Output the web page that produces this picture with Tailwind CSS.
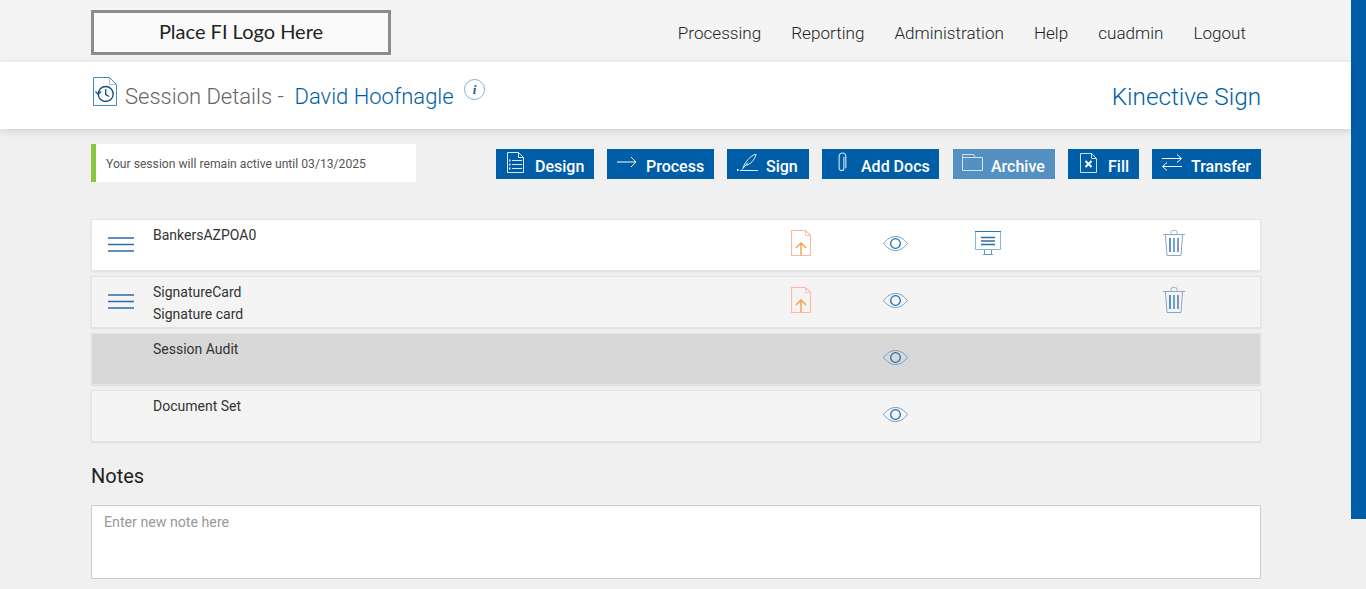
<!DOCTYPE html>
<html lang="en">
<head>
<meta charset="utf-8">
<title>Session Details</title>
<script src="https://cdn.jsdelivr.net/npm/@tailwindcss/browser@4"></script>
</head>
<body class="bg-[#f0f0f0] font-['Roboto',sans-serif] h-[589px] overflow-hidden flex">
<main class="w-[1351px] shrink-0">
  <header class="h-[62px] bg-[#f4f4f4] pl-[91px] pr-[105px] flex items-start justify-between">
    <div class="mt-[10px] w-[300px] h-[45px] pb-[3px] border-[3px] border-[#8c8c8c] bg-[#fafafa] flex items-center justify-center font-['Lato',sans-serif] text-[20px] text-[#222]">Place FI Logo Here</div>
    <nav class="h-[62px] pt-[6px] flex items-center gap-[30px] font-light text-[17.100px] text-[#222]">
      <a>Processing</a><a>Reporting</a><a>Administration</a><a>Help</a><a>cuadmin</a><a>Logout</a>
    </nav>
  </header>
  <section class="h-[67px] bg-white shadow-[0_2px_8px_rgba(0,0,0,0.14)] pl-[91px] pr-[90px] flex justify-between relative">
    <div class="flex items-start">
      <svg class="mt-[15px] ml-[2px]" width="24" height="29" viewBox="0 0 24 29" fill="none"><path d="M.5.500h16l7 7v21H.5z" stroke="#3d8bc9"/><path d="M16.500.500v7h7" stroke="#9cc2e0"/><circle cx="12.700" cy="17" r="7.500" stroke-width="1.400" stroke="#1a4f7d"/><path d="M12.700 12v5.500l3.500 2" stroke-width="1.300" stroke="#1a4f7d"/><path d="M2.500 14.500l2.700 3 3-3" stroke-width="1.200" stroke="#1a4f7d"/></svg>
      <h1 class="ml-[8px] mt-[19px] pt-[1px] font-light text-[22px] leading-[30px] text-[#666]">Session Details -&nbsp; <span class="text-[#005ea8]">David Hoofnagle</span></h1>
      <svg class="ml-[10px] mt-[17px]" width="21" height="21" viewBox="0 0 21 21"><circle cx="10.500" cy="10.500" r="10" fill="none" stroke="#7fb0d6"/><text x="10.500" y="15" text-anchor="middle" font-family="Liberation Serif" font-style="italic" font-weight="700" font-size="13" fill="#1a5a94">i</text></svg>
    </div>
    <p class="mt-[20px] font-light text-[24.300px] leading-[30px] text-[#005ea8]">Kinective Sign</p>
  </section>
  <section class="pl-[91px] pr-[90px] mt-[15px] h-[75px] flex justify-between items-start">
    <div class="w-[325px] h-[38px] bg-white border-l-[5px] border-[#8bc53f] pl-[10px] pt-[2px] flex items-center text-[12.150px] text-[#555]">Your session will remain active until 03/13/2025</div>
    <div class="mt-[5px] flex gap-[13px] text-white text-[16px] font-medium">
      <a class="w-[98px] h-[30px] bg-[#005ea8] flex items-center pl-[11px]">
        <svg class="w-[17px] h-[21px] mb-[3px]" viewBox="0 0 17 21" fill="none" stroke="#dbe9f5"><path d="M.5.500h11l5 5v15H.5z"/><path d="M11.500.500v5h5"/><path d="M5 8.500h10M5 12.500h10M5 16.500h10"/><path d="M2 8.500h1.500M2 12.500h1.500M2 16.500h1.500" stroke-width="2"/></svg>
        <span class="ml-[11px] pt-[6px]">Design</span></a>
      <a class="w-[107px] h-[30px] bg-[#005ea8] flex items-center pl-[10px]">
        <svg class="w-[20px] h-[12px] mb-[4px]" viewBox="0 0 20 12" fill="none" stroke="#fff"><path d="M0 6h19M14 1l5 5-5 5"/></svg>
        <span class="ml-[9px] pt-[6px]">Process</span></a>
      <a class="w-[82px] h-[30px] bg-[#005ea8] flex items-center pl-[10px]">
        <svg class="w-[21px] h-[17px] mb-[3px]" viewBox="0 0 21 17" fill="none" stroke="#e6f0f8"><path d="M0 16h1.500" stroke-width="2"/><path d="M3 16.500h18"/><path d="M6 14c2-6 7-12 13-14-1 6-6 11-11 11.500"/><path d="M5 15.500l6-7"/></svg>
        <span class="ml-[8px] pt-[6px]">Sign</span></a>
      <a class="w-[117px] h-[30px] bg-[#005ea8] flex items-center pl-[15px]">
        <svg class="w-[10px] h-[21px] mb-[3px]" viewBox="0 0 10 22" fill="none" stroke="#cfe0ef" stroke-width="1.200"><path d="M7 5v12a2.500 2.500 0 0 1-5 0V4.500a3.500 3.500 0 0 1 7 0V17"/></svg>
        <span class="ml-[14px] pt-[6px]">Add Docs</span></a>
      <a class="w-[102px] h-[30px] bg-[#5590c3] flex items-center pl-[9px] ml-[1px]">
        <svg class="w-[21px] h-[17px] mb-[3px]" viewBox="0 0 21 17" fill="none" stroke="#d5e3f0"><path d="M.5 16.500V.500h11l2 3h7v13z"/><path d="M.500 3.500h13"/></svg>
        <span class="ml-[8px] pt-[6px]">Archive</span></a>
      <a class="w-[71px] h-[30px] bg-[#005ea8] flex items-center pl-[12px]">
        <svg class="w-[17px] h-[20px] mb-[3px]" viewBox="0 0 17 20" fill="none" stroke="#cfe0ef"><path d="M.5.500h11l5 5v14H.5z"/><path d="M11.500.500v5h5"/><path d="M5.500 8l6 6M11.500 8l-6 6" stroke="#fff" stroke-width="2"/></svg>
        <span class="ml-[11px] pt-[6px]">Fill</span></a>
      <a class="w-[109px] h-[30px] bg-[#005ea8] flex items-center pl-[10px]">
        <svg class="w-[20px] h-[17px] mb-[3px]" viewBox="0 0 20 17" fill="none" stroke="#fff"><path d="M0 4.500h19.500M15 .500l4.500 4-4.500 4"/><path d="M20 12.500H.5M5 8.500l-4.500 4 4.500 4"/></svg>
        <span class="ml-[9px] pt-[6px]">Transfer</span></a>
    </div>
  </section>
  <section class="mx-[91px] w-[1170px] flex flex-col gap-[5px] text-[14px] leading-[22px] text-[#333]">
    <div class="h-[52px] bg-white border border-[#e3e3e3] shadow-[0_1px_2px_rgba(0,0,0,0.08)] grid grid-cols-[61px_601px_94px_94px_93px_92px_94px_39px]">
      <div class="pt-[17px] pl-[16px]"><svg width="26" height="15" viewBox="0 0 26 15" fill="none" stroke="#2f6aa8" stroke-width="1.300"><path d="M0 1h26M0 7.500h26M0 14h26"/></svg></div>
      <div class="pt-[4px]">BankersAZPOA0</div>
      <div class="flex justify-center pt-[10px]"><svg width="20" height="26" viewBox="0 0 20 26" fill="none" stroke="#ffb8a0" stroke-width="1.200"><path d="M.5.500h14l5 5v20H.5z"/><path d="M14.500.500v5h5" stroke="#f3c9bb"/><path d="M10 25.500V13M5 18l5-5 5 5" stroke="#f79a4a" stroke-width="1.300"/></svg></div>
      <div class="flex justify-center pt-[16px]"><svg width="25" height="15" viewBox="0 0 25 15" fill="none"><path d="M.5 7.500C4 3 8 .5 12.500.5S21 3 24.500 7.500C21 12 17 14.500 12.500 14.500S4 12 .5 7.500z" stroke="#6f9ec8"/><circle cx="12.500" cy="7.500" r="4.800" stroke="#1f6fb0" stroke-width="1.300"/></svg></div>
      <div class="flex justify-center pt-[11px] pr-[1px]"><svg width="26" height="24" viewBox="0 0 26 24" fill="none"><path d="M.5.500h25v18H.5z" stroke="#7fb6dc"/><path d="M0 .500h26" stroke="#2e76b0"/><path d="M6 6.500h14M6 10h14M6 13.500h14" stroke="#2f6ca3" stroke-width="1.400"/><path d="M9.500 19v4M16.500 19v4M8 23.500h10" stroke="#5f95c3"/></svg></div>
      <div></div>
      <div class="flex justify-center pt-[10px]"><svg width="22" height="26" viewBox="0 0 22 26" fill="none"><path d="M0 4.500h22" stroke="#8fa9c6"/><path d="M8 4V2a1.500 1.500 0 0 1 1.500-1.500h3A1.500 1.500 0 0 1 14 2v2" stroke="#a3b6c9"/><path d="M2.500 5l1.500 20.500h14L19.500 5" stroke="#88a6c8"/><path d="M7 8v14" stroke="#3c6aa8" stroke-width="1.500"/><path d="M11 8v14" stroke="#1a9ad0" stroke-width="1.500"/><path d="M15 8v14" stroke="#6d6aa8" stroke-width="1.500"/></svg></div>
      <div></div>
    </div>
    <div class="h-[52px] bg-[#f4f4f4] border border-[#e3e3e3] shadow-[0_1px_2px_rgba(0,0,0,0.08)] grid grid-cols-[61px_601px_94px_94px_93px_92px_94px_39px]">
      <div class="pt-[17px] pl-[16px]"><svg width="26" height="15" viewBox="0 0 26 15" fill="none" stroke="#2f6aa8" stroke-width="1.300"><path d="M0 1h26M0 7.500h26M0 14h26"/></svg></div>
      <div class="pt-[4px]"><p>SignatureCard</p><p>Signature card</p></div>
      <div class="flex justify-center pt-[10px]"><svg width="20" height="26" viewBox="0 0 20 26" fill="none" stroke="#ffb8a0" stroke-width="1.200"><path d="M.5.500h14l5 5v20H.5z"/><path d="M14.500.500v5h5" stroke="#f3c9bb"/><path d="M10 25.500V13M5 18l5-5 5 5" stroke="#f79a4a" stroke-width="1.300"/></svg></div>
      <div class="flex justify-center pt-[16px]"><svg width="25" height="15" viewBox="0 0 25 15" fill="none"><path d="M.5 7.500C4 3 8 .5 12.500.5S21 3 24.500 7.500C21 12 17 14.500 12.500 14.500S4 12 .5 7.500z" stroke="#6f9ec8"/><circle cx="12.500" cy="7.500" r="4.800" stroke="#1f6fb0" stroke-width="1.300"/></svg></div>
      <div></div>
      <div></div>
      <div class="flex justify-center pt-[10px]"><svg width="22" height="26" viewBox="0 0 22 26" fill="none"><path d="M0 4.500h22" stroke="#8fa9c6"/><path d="M8 4V2a1.500 1.500 0 0 1 1.500-1.500h3A1.500 1.500 0 0 1 14 2v2" stroke="#a3b6c9"/><path d="M2.500 5l1.500 20.500h14L19.500 5" stroke="#88a6c8"/><path d="M7 8v14" stroke="#3c6aa8" stroke-width="1.500"/><path d="M11 8v14" stroke="#1a9ad0" stroke-width="1.500"/><path d="M15 8v14" stroke="#6d6aa8" stroke-width="1.500"/></svg></div>
      <div></div>
    </div>
    <div class="h-[52px] bg-[#d8d8d8] border border-[#e3e3e3] shadow-[0_1px_2px_rgba(0,0,0,0.08)] grid grid-cols-[61px_601px_94px_94px_93px_92px_94px_39px]">
      <div></div>
      <div class="pt-[4px]">Session Audit</div>
      <div></div>
      <div class="flex justify-center pt-[16px]"><svg width="25" height="15" viewBox="0 0 25 15" fill="none"><path d="M.5 7.500C4 3 8 .5 12.500.5S21 3 24.500 7.500C21 12 17 14.500 12.500 14.500S4 12 .5 7.500z" stroke="#6f9ec8"/><circle cx="12.500" cy="7.500" r="4.800" stroke="#1f6fb0" stroke-width="1.300"/></svg></div>
    </div>
    <div class="h-[52px] bg-[#f4f4f4] border border-[#e3e3e3] shadow-[0_1px_2px_rgba(0,0,0,0.08)] grid grid-cols-[61px_601px_94px_94px_93px_92px_94px_39px]">
      <div></div>
      <div class="pt-[4px]">Document Set</div>
      <div></div>
      <div class="flex justify-center pt-[16px]"><svg width="25" height="15" viewBox="0 0 25 15" fill="none"><path d="M.5 7.500C4 3 8 .5 12.500.5S21 3 24.500 7.500C21 12 17 14.500 12.500 14.500S4 12 .5 7.500z" stroke="#6f9ec8"/><circle cx="12.500" cy="7.500" r="4.800" stroke="#1f6fb0" stroke-width="1.300"/></svg></div>
    </div>
  </section>
  <section class="mx-[91px] w-[1170px]">
    <h2 class="mt-[22px] text-[20px] leading-[24px] text-[#222]">Notes</h2>
    <textarea class="mt-[17px] block w-[1170px] h-[74px] bg-white border border-[#ccc] px-[12px] py-[6px] text-[14.200px] leading-[20px] resize-none placeholder:text-[#999]" placeholder="Enter new note here"></textarea>
  </section>
</main>
<aside class="w-[15px] h-[589px] bg-[#f0f0f0]"><div class="h-[519px] bg-[#005ea8]"></div></aside>
</body>
</html>
